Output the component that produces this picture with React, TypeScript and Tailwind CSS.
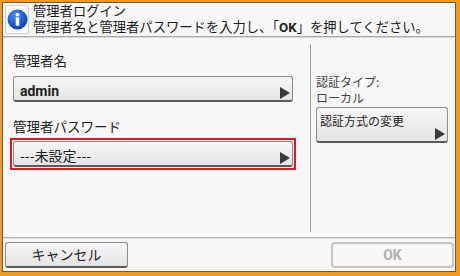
import React from 'react';

const jp = "font-['Noto_Sans_CJK_JP','Noto_Sans',sans-serif]";

const Arrow = () => (
  <span className="absolute right-[2px] bottom-[1px] w-0 h-0 border-y-[6px] border-y-transparent border-l-[10px] border-l-[#3a3a3a]" />
);

const SelectButton: React.FC<{ label: string; bold?: boolean }> = ({ label, bold }) => (
  <button className="relative w-full h-[26px] rounded-[3px] border border-[#8c8c8c] border-b-2 border-b-[#5a5a5a] bg-gradient-to-b from-[#f7f7f7] to-[#e4e4e4] text-left pl-[6px] text-[#1e1e1e]">
    <span className={bold ? "text-[14px] font-bold font-['Roboto',sans-serif]" : 'text-[14px]'}>{label}</span>
    <Arrow />
  </button>
);

export default function App() {
  return (
    <div className={`w-[460px] h-[276px] bg-[#f39a1a] pl-[2px] pt-[2px] pr-[4px] pb-[4px] ${jp}`}>
      <div className="w-full h-full border border-[#5c5c5c] bg-[#f7f7f7] flex flex-col">
        {/* Header */}
        <div className="h-[33px] flex items-start gap-[4px] pl-[2px]">
          <div className="w-[24px] h-[29px] mt-[2px] border border-[#d0d0d0] rounded-[2px] bg-[#fbfbfb] flex items-center justify-center">
            <svg width="21" height="21" viewBox="0 0 20 20">
              <defs>
                <radialGradient id="ib" cx="40%" cy="30%" r="70%">
                  <stop offset="0" stopColor="#4d8ef0" />
                  <stop offset="1" stopColor="#0a3fb5" />
                </radialGradient>
              </defs>
              <circle cx="10" cy="10" r="9.5" fill="url(#ib)" />
              <circle cx="10" cy="5.3" r="1.8" fill="#fff" />
              <rect x="8.3" y="8" width="3.4" height="8" rx="0.6" fill="#fff" />
            </svg>
          </div>
          <div className="text-[13.3px] leading-[16px] text-[#1c1c1c]">
            <div>管理者ログイン</div>
            <div>
              管理者名と管理者パスワードを入力し、「<span className="font-bold font-['Roboto',sans-serif]">OK</span>」を押してください。
            </div>
          </div>
        </div>
        <div className="h-[2px] bg-[#a8a8a8] border-b border-[#d8d8d8]" />

        {/* Main */}
        <div className="h-[199px] flex">
          <div className="w-[307px] pl-[10px] pr-[17px] pt-[13px] flex flex-col">
            <div className="text-[13.5px] leading-[18px] text-[#222]">管理者名</div>
            <div className="mt-[7px]">
              <SelectButton label="admin" bold />
            </div>
            <div className="mt-[15px] text-[13.5px] leading-[18px] text-[#222]">管理者パスワード</div>
            <div className="mt-[3px] border-2 border-[#e8141c] p-[1px] -mx-[3px]">
              <SelectButton label="---未設定---" />
            </div>
          </div>
          <div className="w-px bg-[#9a9a9a] mt-[6px] mb-[5px]" />
          <div className="flex-1 pl-[5px] pr-[7px] pt-[36px] flex flex-col">
            <div className="text-[12px] leading-[16px] text-[#444]">認証タイプ:</div>
            <div className="text-[12px] leading-[16px] text-[#444]">ローカル</div>
            <button className="relative mt-[1px] h-[36px] rounded-[3px] border border-[#8c8c8c] border-b-2 border-b-[#5a5a5a] bg-gradient-to-b from-[#f7f7f7] to-[#e4e4e4] text-left pl-[3px] pb-[8px] text-[12px] text-[#1e1e1e]">
              認証方式の変更
              <Arrow />
            </button>
          </div>
        </div>

        {/* Footer */}
        <div className="h-[2px] bg-[#b8b8b8] border-b border-[#dcdcdc]" />
        <div className="flex-1 flex justify-between items-start pl-[2px] pr-[1px] pt-[3px]">
          <button className="w-[123px] h-[26px] rounded-[3px] border border-[#8c8c8c] border-b-2 border-b-[#5a5a5a] bg-gradient-to-b from-[#f7f7f7] to-[#e4e4e4] text-[14px] text-[#222]">
            キャンセル
          </button>
          <button className="w-[123px] h-[26px] rounded-[4px] border-2 border-[#c4c4c4] bg-[#f7f7f7] text-[14px] font-bold text-[#b0b0b0] font-['Roboto',sans-serif]">
            OK
          </button>
        </div>
      </div>
    </div>
  );
}
